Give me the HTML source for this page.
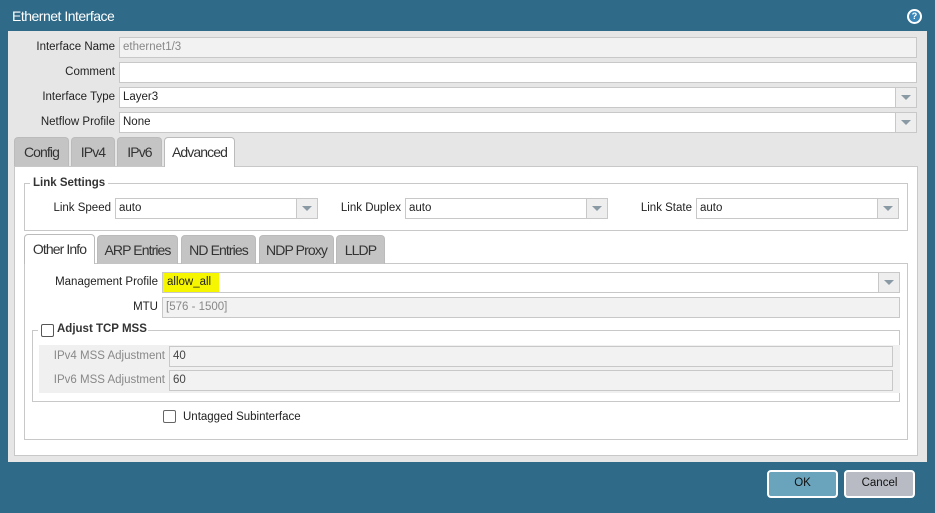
<!DOCTYPE html>
<html><head><meta charset="utf-8"><style>
*{box-sizing:border-box;margin:0;padding:0}
body{width:935px;height:513px;background:#2f6a88;position:relative;overflow:hidden;font-family:"Liberation Sans",sans-serif;font-size:11.5px;color:#222}
.a{position:absolute}
.title{left:12px;top:8px;color:#fff;font-family:"Liberation Sans",sans-serif;font-size:14px;letter-spacing:-0.5px}
.help{left:907px;top:9px;width:15px;height:15px;border-radius:50%;background:#fff;}
.help div{position:absolute;left:2px;top:2px;width:11px;height:11px;border-radius:50%;background:#3a86b8;color:#fff;font-size:9px;font-weight:bold;text-align:center;line-height:11px;font-family:"Liberation Sans",sans-serif}
.body{left:8px;top:31px;width:919px;height:431px;background:#e6e6e6}
.lbl{text-align:right;color:#222;line-height:20px}
.in{background:#fff;border:1px solid #c8c8c8;height:21px;line-height:19px;padding-left:3px}
.dis{background:#f2f2f2;color:#888}
.dd::after{content:"";position:absolute;right:0;top:0;width:20px;height:19px;border-left:1px solid #c8c8c8;background:#eee}
.dd::before{content:"";position:absolute;right:5px;top:7px;border-left:5px solid transparent;border-right:5px solid transparent;border-top:5px solid #8a9aa4;z-index:2}
.tab{background:#c4c4c4;border:1px solid #bbb;border-bottom:none;border-radius:4px 4px 0 0;font-family:"Liberation Sans",sans-serif;font-size:14px;color:#333;text-align:center;letter-spacing:-0.9px;line-height:28px;height:29px}
.tab.on{background:#fff;height:30px}
.box{border:1px solid #c8c8c8}
.cb{width:13px;height:13px;border:1px solid #555;border-radius:2px;background:#fff}
.btn{border:2px solid #fff;border-radius:4px;text-align:center;line-height:23px;color:#111}
</style></head><body>
<div class="a title">Ethernet Interface</div>
<div class="a help"><div>?</div></div>
<div class="a body"></div>

<div class="a lbl" style="left:20px;top:37px;width:95px">Interface Name</div>
<div class="a in dis" style="left:119px;top:37px;width:798px">ethernet1/3</div>
<div class="a lbl" style="left:20px;top:62px;width:95px">Comment</div>
<div class="a in" style="left:119px;top:62px;width:798px"></div>
<div class="a lbl" style="left:20px;top:87px;width:95px">Interface Type</div>
<div class="a in dd" style="left:119px;top:87px;width:798px">Layer3</div>
<div class="a lbl" style="left:20px;top:112px;width:95px">Netflow Profile</div>
<div class="a in dd" style="left:119px;top:112px;width:798px">None</div>

<div class="a tab" style="left:14px;top:137px;width:55px">Config</div>
<div class="a tab" style="left:71px;top:137px;width:44px">IPv4</div>
<div class="a tab" style="left:117px;top:137px;width:45px">IPv6</div>

<div class="a" style="left:14px;top:166px;width:904px;height:290px;background:#fff;border:1px solid #c8c8c8"></div>
<div class="a tab on" style="left:164px;top:137px;width:71px">Advanced</div>

<div class="a box" style="left:24px;top:183px;width:884px;height:48px"></div>
<div class="a" style="left:30px;top:177px;background:#fff;padding:0 3px;font-weight:bold;color:#333">Link Settings</div>
<div class="a lbl" style="left:30px;top:198px;width:81px">Link Speed</div>
<div class="a in dd" style="left:115px;top:198px;width:203px">auto</div>
<div class="a lbl" style="left:330px;top:198px;width:71px">Link Duplex</div>
<div class="a in dd" style="left:405px;top:198px;width:203px">auto</div>
<div class="a lbl" style="left:630px;top:198px;width:62px">Link State</div>
<div class="a in dd" style="left:696px;top:198px;width:203px">auto</div>

<div class="a box" style="left:24px;top:263px;width:884px;height:177px"></div>
<div class="a tab on" style="left:24px;top:234px;width:71px">Other Info</div>
<div class="a tab" style="left:97px;top:235px;width:81px">ARP Entries</div>
<div class="a tab" style="left:181px;top:235px;width:75px">ND Entries</div>
<div class="a tab" style="left:259px;top:235px;width:75px">NDP Proxy</div>
<div class="a tab" style="left:336px;top:235px;width:49px">LLDP</div>

<div class="a lbl" style="left:30px;top:272px;width:128px">Management Profile</div>
<div class="a in dd" style="left:162px;top:272px;width:738px;padding-left:0"><span style="background:#f6f600;display:inline-block;width:56px;padding-left:4px">allow_all</span></div>
<div class="a lbl" style="left:30px;top:297px;width:128px">MTU</div>
<div class="a in dis" style="left:162px;top:297px;width:738px">[576 - 1500]</div>

<div class="a box" style="left:32px;top:330px;width:868px;height:72px"></div>
<div class="a" style="left:39px;top:345px;width:861px;height:48px;background:#f0f0f0"></div>
<div class="a" style="left:38px;top:322px;background:#fff;width:110px;height:16px"></div>
<div class="a cb" style="left:41px;top:324px"></div>
<div class="a" style="left:57px;top:323px;font-weight:bold;color:#333">Adjust TCP MSS</div>
<div class="a lbl" style="left:40px;top:346px;width:125px;color:#888">IPv4 MSS Adjustment</div>
<div class="a in dis" style="left:169px;top:346px;width:724px;color:#444">40</div>
<div class="a lbl" style="left:40px;top:370px;width:125px;color:#888">IPv6 MSS Adjustment</div>
<div class="a in dis" style="left:169px;top:370px;width:724px;color:#444">60</div>

<div class="a cb" style="left:163px;top:410px;border-color:#666"></div>
<div class="a" style="left:183px;top:411px">Untagged Subinterface</div>

<div class="a btn" style="left:767px;top:470px;width:71px;height:28px;background:#6aa3bc">OK</div>
<div class="a btn" style="left:844px;top:470px;width:71px;height:28px;background:#b8bbc3">Cancel</div>
</body></html>
